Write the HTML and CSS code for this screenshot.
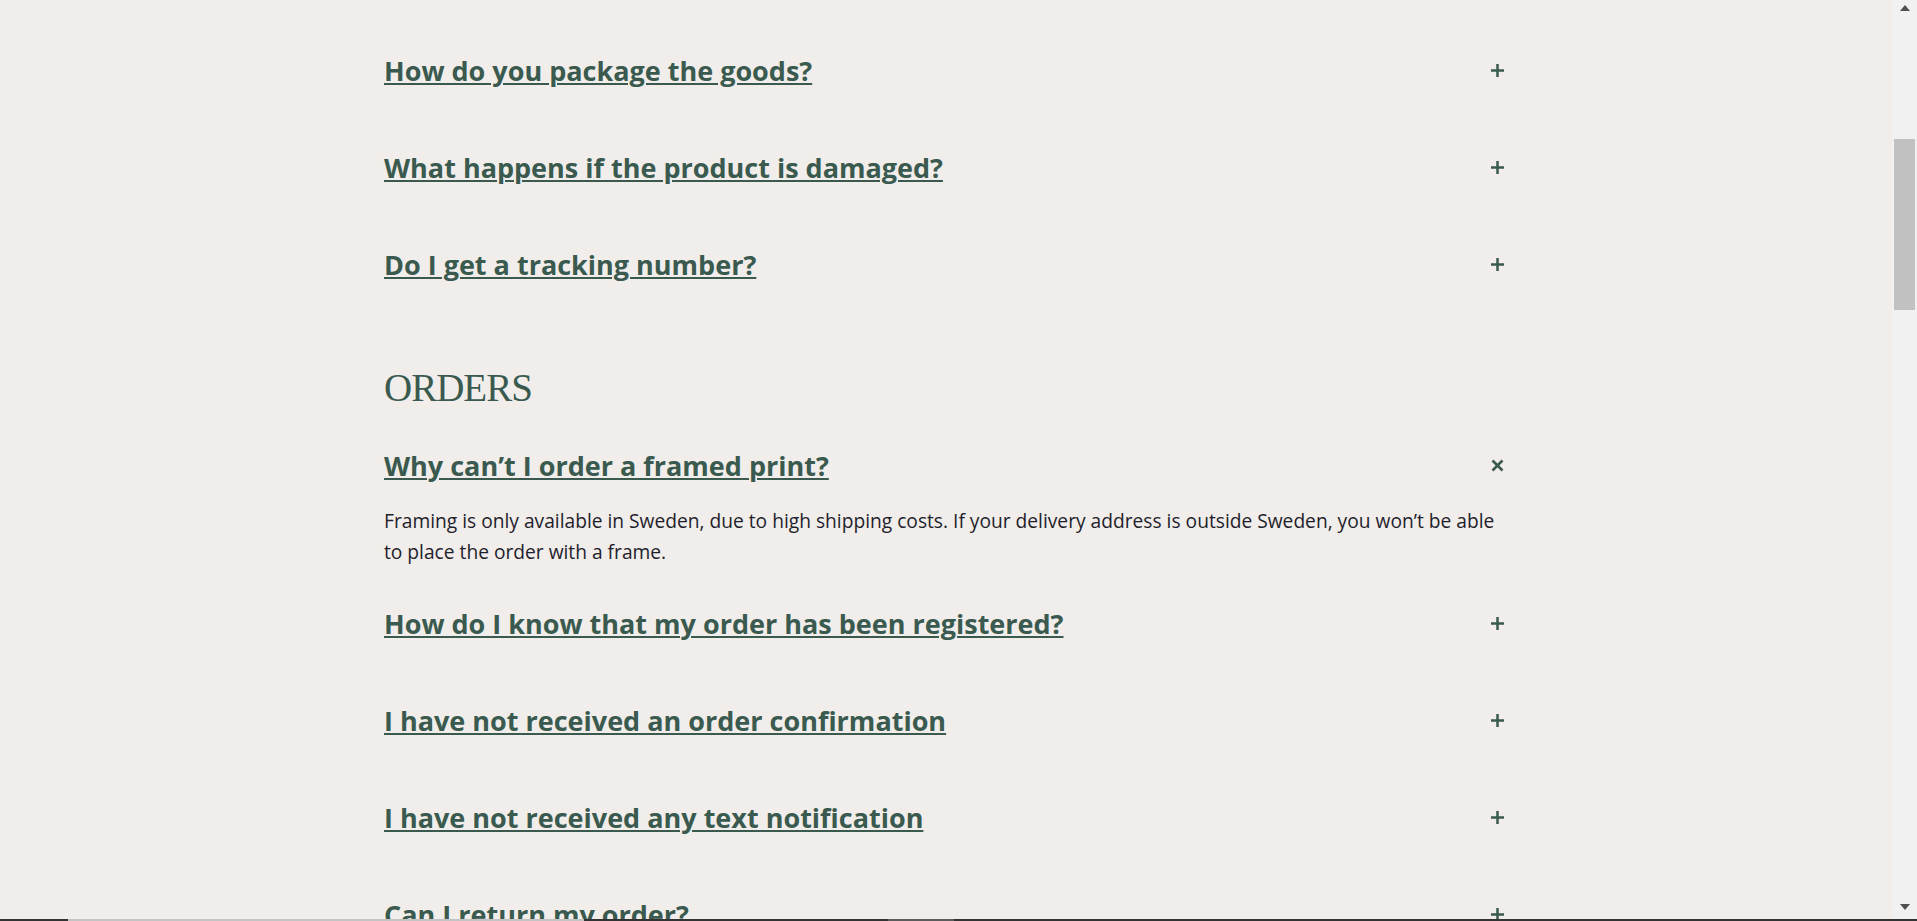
FILE: index.html
```html
<!DOCTYPE html>
<html lang="en">
<head>
<meta charset="utf-8">
<title>FAQ</title>
<link rel="stylesheet" href="styles.css">
</head>
<body>
<div class="window">
  <main class="page">
    <div class="faq">
      <div class="item">
        <div class="q"><a class="q-text" href="#">How do you package the goods?</a><svg class="icon" width="13" height="13" viewBox="0 0 13 13"><rect x="5.25" y="0" width="2.5" height="13"/><rect x="0" y="5.25" width="13" height="2.5"/></svg></div>
      </div>
      <div class="item">
        <div class="q"><a class="q-text" href="#">What happens if the product is damaged?</a><svg class="icon" width="13" height="13" viewBox="0 0 13 13"><rect x="5.25" y="0" width="2.5" height="13"/><rect x="0" y="5.25" width="13" height="2.5"/></svg></div>
      </div>
      <div class="item">
        <div class="q"><a class="q-text" href="#">Do I get a tracking number?</a><svg class="icon" width="13" height="13" viewBox="0 0 13 13"><rect x="5.25" y="0" width="2.5" height="13"/><rect x="0" y="5.25" width="13" height="2.5"/></svg></div>
      </div>

      <h2 class="section-title">ORDERS</h2>

      <div class="item open">
        <div class="q"><a class="q-text" href="#">Why can’t I order a framed print?</a><svg class="icon close" width="13" height="13" viewBox="0 0 13 13"><path d="M1.5 1.5 L11.5 11.5 M11.5 1.5 L1.5 11.5"/></svg></div>
        <p class="answer">Framing is only available in Sweden, due to high shipping costs. If your delivery address is outside Sweden, you won’t be able to place the order with a frame.</p>
      </div>
      <div class="item">
        <div class="q"><a class="q-text" href="#">How do I know that my order has been registered?</a><svg class="icon" width="13" height="13" viewBox="0 0 13 13"><rect x="5.25" y="0" width="2.5" height="13"/><rect x="0" y="5.25" width="13" height="2.5"/></svg></div>
      </div>
      <div class="item">
        <div class="q"><a class="q-text" href="#">I have not received an order confirmation</a><svg class="icon" width="13" height="13" viewBox="0 0 13 13"><rect x="5.25" y="0" width="2.5" height="13"/><rect x="0" y="5.25" width="13" height="2.5"/></svg></div>
      </div>
      <div class="item">
        <div class="q"><a class="q-text" href="#">I have not received any text notification</a><svg class="icon" width="13" height="13" viewBox="0 0 13 13"><rect x="5.25" y="0" width="2.5" height="13"/><rect x="0" y="5.25" width="13" height="2.5"/></svg></div>
      </div>
      <div class="item">
        <div class="q"><a class="q-text" href="#">Can I return my order?</a><svg class="icon" width="13" height="13" viewBox="0 0 13 13"><rect x="5.25" y="0" width="2.5" height="13"/><rect x="0" y="5.25" width="13" height="2.5"/></svg></div>
      </div>
    </div>
  </main>
  <div class="scrollbar">
    <div class="arrow up"></div>
    <div class="track"><div class="thumb"></div></div>
    <div class="arrow down"></div>
  </div>
</div>
<div class="taskstrip">
  <span class="seg dark s1"></span>
  <span class="seg light s2"></span>
  <span class="seg dark s3"></span>
  <span class="seg mid s4"></span>
  <span class="seg dark s5"></span>
</div>
</body>
</html>
```

FILE: styles.css
```css
* { box-sizing: border-box; }

html, body {
  margin: 0;
  padding: 0;
  height: 100%;
  overflow: hidden;
}

body {
  background: #f0edea;
  font-family: "Open Sans", "Liberation Sans", sans-serif;
  color: #1f1e2c;
}

.window {
  display: flex;
  height: 100vh;
}

.page {
  flex: 1;
  overflow: hidden;
}

.faq {
  width: 1124px;
  margin: 0 auto;
  padding-top: 22px;
}

.item {
  padding: 30px 0;
}

.item.open {
  padding-bottom: 8px;
}

.q {
  display: flex;
  align-items: center;
  justify-content: space-between;
  height: 37px;
}

.q-text {
  font-size: 27px;
  line-height: 37px;
  font-weight: 700;
  color: #3a5a4f;
  text-decoration: underline;
  text-decoration-thickness: 2px;
  text-underline-offset: 2px;
}

.icon {
  fill: #3a5a4f;
  stroke: none;
  margin-right: 4px;
  flex: none;
}

.icon.close {
  fill: none;
  stroke: #3a5a4f;
  stroke-width: 2.6;
}

.answer {
  margin: 22px 0 0;
  font-size: 19.2px;
  line-height: 30.6px;
  color: #1f1e2c;
}

.section-title {
  margin: 51px 0 5px;
  font-family: "Liberation Serif", "DejaVu Serif", serif;
  font-weight: 400;
  font-size: 39px;
  line-height: 48px;
  letter-spacing: -1px;
  color: #3a5a4f;
}

.scrollbar {
  width: 25px;
  flex: none;
  background: #f1f1f1;
  display: flex;
  flex-direction: column;
  align-items: center;
}

.arrow {
  width: 0;
  height: 0;
  border-left: 5px solid transparent;
  border-right: 5px solid transparent;
  flex: none;
}

.arrow.up {
  margin-top: 5px;
  border-bottom: 6px solid #505050;
}

.arrow.down {
  margin-bottom: 11px;
  border-top: 6px solid #505050;
}

.track {
  flex: 1;
  width: 100%;
  padding: 0 2px;
}

.thumb {
  margin-top: 128px;
  height: 171px;
  background: #c1c1c1;
}

.taskstrip {
  position: fixed;
  left: 0;
  right: 0;
  bottom: 0;
  height: 2px;
  display: flex;
}

.seg { height: 2px; }
.seg.dark { background: #333333; }
.seg.light { background: #c3c3c3; }
.seg.mid { background: #5c5c5c; }
.s1 { width: 68px; }
.s2 { width: 516px; }
.s3 { width: 304px; }
.s4 { width: 66px; }
.s5 { flex: 1; }
```
